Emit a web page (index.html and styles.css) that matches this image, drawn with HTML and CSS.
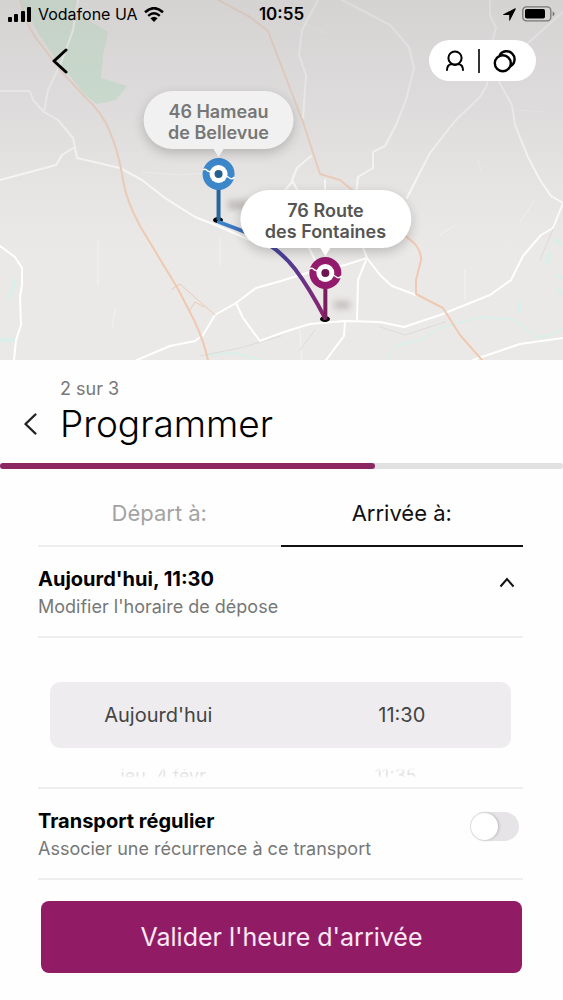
FILE: index.html
```html
<!DOCTYPE html>
<html lang="fr">
<head>
    <meta charset="UTF-8">
    <meta name="viewport" content="width=device-width, initial-scale=1.0">
    <title>Programmer</title>
    <link rel="stylesheet" href="styles.css">
</head>
<body>
    <section class="map">
        <svg class="map-canvas" viewBox="0 0 563 360" preserveAspectRatio="xMidYMid slice" fill="none" stroke-linejoin="round" stroke-linecap="round" aria-hidden="true">
            <defs>
                <linearGradient id="shade" x1="0" y1="0" x2="0" y2="1">
                    <stop offset="0" stop-color="#c6c4c4" stop-opacity=".6"/>
                    <stop offset=".3" stop-color="#cdcbcd" stop-opacity=".45"/>
                    <stop offset=".7" stop-color="#d8d6d4" stop-opacity="0"/>
                </linearGradient>
                <linearGradient id="route" gradientUnits="userSpaceOnUse" x1="218" y1="222" x2="325" y2="319">
                    <stop offset="0" stop-color="#3a86cb"/>
                    <stop offset=".5" stop-color="#4c3f97"/>
                    <stop offset="1" stop-color="#90206c"/>
                </linearGradient>
                <filter id="soft" x="-50%" y="-50%" width="200%" height="200%"><feGaussianBlur stdDeviation="3"/></filter>
            </defs>
            <rect width="563" height="360" fill="#ebe9e7"/>
            <!-- parc et eau -->
            <path fill="#c5e4cb" d="M20 0H77L79 15L108 32L103 55L101 78L127 86L116 100L97 104L85 95L70 76L55 58L40 36Z"/>
            <g stroke="#daeeea" stroke-width="2">
                <path d="M388 360L395 346L420 340L440 328L480 317L515 320L535 337L548 336L563 329"/>
                <path d="M208 355L235 353L260 360"/>
                <path d="M0 340H14M15 280L10 297M546 262L550 254M556 240L560 244M558 276L563 278M519 302V311M558 290L563 294" stroke-width="4"/>
            </g>
            <!-- routes secondaires -->
            <g stroke="#f4f3f1" stroke-width="1">
                <path d="M142 172L180 175L205 173M230 215Q240 208 252 212M380 0M220 238V265M98 240V285M115 310L112 328M465 270V300M520 222L535 200"/>
                <path d="M281 13L330 35M515 110L545 112M478 160L481 172M440 235L455 225M300 330L302 360"/>
            </g>
            <path stroke="#dddbd9" stroke-width="1" d="M200 356L240 348L281 336M380 327L405 335L445 322M540 260L555 225M315 330L300 350"/>
            <g stroke="#fff" stroke-width="2">
                <path d="M0 91H30L33 100L44 112L58 120L73 138L77 158L120 168L142 180L165 198L195 217L218 226L245 238L270 248"/>
                <path d="M0 180L30 172L56 165L62 155L75 147"/>
                <path d="M78 0L73 30L66 50L60 65L48 90L44 112"/>
                <path d="M0 246L15 257L22 268V285L20 297L21 325L16 340L14 360"/>
                <path d="M137 360L170 346L195 341L203 335L215 315L236 303L256 288L281 281L310 272L345 265L367 258L380 275L392 286L416 295"/>
                <path d="M236 303L243 318L260 341L281 333L310 324L345 321L380 322L404 327L440 315L490 295L511 280L523 256L541 235L553 228L563 203"/>
                <path d="M563 12L545 28L528 43M498 80L512 105L515 125L528 157L540 180L551 196L563 203"/>
                <path d="M490 0V15L496 28L492 42L487 85L480 97L455 121L430 153L416 180L407 198"/>
                <path d="M318 0L302 30L299 55L306 75L303 118"/>
                <path d="M342 0L390 25L409 47L414 68L406 100L396 125L385 146L373 152V168L358 177L356 195L352 225L362 245L367 258L358 280L357 320"/>
                <path d="M311 156L297 168L292 180L300 195M325 180V200M305 240L315 260M281 195L292 182"/>
                <path d="M345 321L344 336L326 360M473 360L520 344L563 338"/>
            </g>
            <!-- grands axes -->
            <g stroke="#efc9b1" stroke-width="2">
                <path d="M20 0L24 12Q28 30 43 47L62 72L85 97Q102 112 110 132Q119 153 123 180Q126 200 140 226L178 289L195 322Q204 342 208 360"/>
                <path d="M218 0L250 17L268 31L281 65L303 122L320 174L340 180L351 189L370 205L408 238Q422 248 421 260L416 280V294L443 308L460 335L482 360"/>
                <path d="M172 289L180 284L215 315M190 310L195 302L204 307" stroke-width="1"/>
            </g>
            <rect width="563" height="360" fill="url(#shade)"/>
            <!-- trajet -->
            <path fill="#a7a5a3" filter="url(#soft)" opacity=".6" d="M228 200H248V210H228ZM334 301H350V309H334Z"/>
            <ellipse cx="218" cy="220" rx="5" ry="3" fill="#000"/>
            <ellipse cx="325" cy="319" rx="5" ry="3" fill="#000"/>
            <path stroke="url(#route)" stroke-width="4" d="M219 222L240 230Q275 243 295 269Q310 289 325 318"/>
        </svg>

        <div class="pin pin-start">
            <p class="bubble">46 Hameau<br>de Bellevue</p>
            <svg class="marker" width="34" height="64" viewBox="0 0 34 64" fill="none" aria-hidden="true">
                <path stroke="#28659b" stroke-width="4" d="M17 29V62"/>
                <circle cx="17" cy="16" r="16" fill="#3c86ca"/>
                <circle cx="17" cy="16" r="9" fill="#fff"/>
                <circle cx="17" cy="16" r="4" fill="#265f8e"/>
                <path stroke="#fff" stroke-width="1.4" d="M1 12Q4 10 6 13L9 14M25 18L28 20Q31 22 33 19"/>
            </svg>
        </div>
        <div class="pin pin-end">
            <p class="bubble">76 Route<br>des Fontaines</p>
            <svg class="marker" width="34" height="64" viewBox="0 0 34 64" fill="none" aria-hidden="true">
                <path stroke="#77205d" stroke-width="4" d="M17 29V62"/>
                <circle cx="17" cy="16" r="16" fill="#921b6b"/>
                <circle cx="17" cy="16" r="9" fill="#fff"/>
                <circle cx="17" cy="16" r="4" fill="#6e1450"/>
                <path stroke="#fff" stroke-width="1.4" d="M1 12Q4 10 6 13L9 14M25 18L28 20Q31 22 33 19"/>
            </svg>
        </div>

        <div class="map-top">
            <div class="status-bar">
                <div class="status-left">
                    <svg width="24" height="15" viewBox="0 0 24 15" aria-hidden="true">
                        <rect x="0" y="10" width="4" height="5" rx="1"/>
                        <rect x="6" y="7" width="4" height="8" rx="1"/>
                        <rect x="13" y="4" width="4" height="11" rx="1"/>
                        <rect x="19" y="0" width="4" height="15" rx="1"/>
                    </svg>
                    <span>Vodafone UA</span>
                    <svg width="20" height="15" viewBox="0 0 20 15" fill="none" stroke="#000" aria-hidden="true">
                        <path stroke-width="2.6" d="M1 5.2Q10 -2.8 19 5.2"/>
                        <path stroke-width="2.4" d="M4.2 8.8Q10 3.6 15.8 8.8"/>
                        <path fill="#000" stroke="none" d="M10 15L6.4 11.3Q10 8.2 13.6 11.3Z"/>
                    </svg>
                </div>
                <span class="status-time">10:55</span>
                <div class="status-right">
                    <svg width="13" height="13" viewBox="0 0 13 13" aria-hidden="true"><path d="M0 6.5L12 .2Q13 0 12.8 1L6.8 12.7Q6.3 13 6.2 12.3V6.9H.6Q-.2 6.8 0 6.5Z"/></svg>
                    <svg width="33" height="16" viewBox="0 0 33 16" aria-hidden="true">
                        <rect x=".8" y=".8" width="28" height="14" rx="3.6" fill="none" stroke="#777" stroke-width="1.3"/>
                        <rect x="3" y="3" width="20" height="9.6" rx="1.8"/>
                        <path fill="#777" d="M30.6 5.4Q32.6 6 32.6 7.8T30.6 10.2Z"/>
                    </svg>
                </div>
            </div>
            <div class="map-actions">
                <button class="icon-button" type="button" aria-label="Retour">
                    <svg width="16" height="26" viewBox="0 0 16 26" fill="none" stroke="#000" stroke-width="3" stroke-linecap="round" stroke-linejoin="round"><path d="M14 2L2 13L14 24"/></svg>
                </button>
                <div class="pill">
                    <button class="icon-button" type="button" aria-label="Profil">
                        <svg width="18" height="22" viewBox="0 0 18 22" fill="none" stroke="#000" stroke-width="2" stroke-linecap="round"><circle cx="9" cy="8" r="6.6"/><path d="M1 20Q1 15 5.4 14Q9 16 12.6 14Q17 15 17 20"/></svg>
                    </button>
                    <span class="pill-line"></span>
                    <button class="icon-button" type="button" aria-label="Trajets">
                        <svg width="24" height="24" viewBox="0 0 24 24" fill="none" stroke="#000" stroke-width="2.4"><path d="M6.6 6.3A8 8 0 1 1 17.5 17.2"/><circle cx="9.8" cy="14.2" r="8"/></svg>
                    </button>
                </div>
            </div>
        </div>
    </section>

    <main>
        <header class="step">
            <button class="icon-button" type="button" aria-label="Étape précédente">
                <svg width="13" height="22" viewBox="0 0 13 22" fill="none" stroke="#222" stroke-width="2.4" stroke-linecap="round" stroke-linejoin="round"><path d="M11.4 1.5L1.5 11L11.4 20.5"/></svg>
            </button>
            <div>
                <p class="step-count">2 sur 3</p>
                <h1>Programmer</h1>
            </div>
        </header>
        <div class="progress"><div class="progress-bar" style="width: 66.6%"></div></div>

        <div class="content">
            <div class="tabs" role="tablist">
                <button class="tab" type="button" role="tab" aria-selected="false">Départ à:</button>
                <button class="tab active" type="button" role="tab" aria-selected="true">Arrivée à:</button>
            </div>

            <button class="row" type="button" aria-expanded="true">
                <span class="row-text">
                    <span class="row-title">Aujourd'hui, 11:30</span>
                    <span class="row-sub">Modifier l'horaire de dépose</span>
                </span>
                <svg class="chevron" width="16" height="11" viewBox="0 0 16 11" fill="none" stroke="#111" stroke-width="2"><path d="M1.5 9.5L8 2L14.5 9.5"/></svg>
            </button>

            <div class="picker">
                <div class="picker-row selected">
                    <span>Aujourd'hui</span>
                    <span class="picker-time">11:30</span>
                </div>
                <div class="picker-row next">
                    <span>jeu. 4 févr.</span>
                    <span>11:35</span>
                </div>
            </div>

            <label class="row" for="recurring">
                <span class="row-text">
                    <span class="row-title">Transport régulier</span>
                    <span class="row-sub">Associer une récurrence à ce transport</span>
                </span>
                <input class="switch" type="checkbox" id="recurring">
            </label>

            <button class="submit" type="button">Valider l'heure d'arrivée</button>
        </div>
    </main>
</body>
</html>
```

FILE: styles.css
```css
* {
    box-sizing: border-box;
}

body {
    margin: 0;
    background-color: #fefefe;
    color: #000;
    font-family: Inter, "Liberation Sans", sans-serif;
}

p, h1 {
    margin: 0;
}

button {
    padding: 0;
    border: none;
    background: transparent;
    color: inherit;
    font-family: inherit;
    cursor: pointer;
}

svg {
    display: block;
    flex: none;
}

/* carte */
.map {
    position: relative;
    height: 360px;
    overflow: hidden;
}

.map-canvas {
    position: absolute;
    inset: 0;
    width: 100%;
    height: 100%;
}

.map-top {
    position: relative;
}

.status-bar {
    display: grid;
    grid-template-columns: 1fr auto 1fr;
    align-items: center;
    height: 28px;
    padding: 0 8px;
    font-size: 16px;
}

.status-left, .status-right {
    display: flex;
    align-items: center;
    gap: 6px;
}

.status-right {
    justify-content: flex-end;
}

.status-time {
    font-size: 17px;
    font-weight: 600;
}

.map-actions {
    display: flex;
    align-items: center;
    justify-content: space-between;
    padding: 12px 27px 0 52px;
}

.icon-button {
    display: flex;
    align-items: center;
    justify-content: center;
}

.pill {
    display: flex;
    align-items: center;
    justify-content: space-between;
    width: 107px;
    height: 41px;
    padding: 0 19px 0 17px;
    background-color: #fff;
    border-radius: 21px;
}

.pill-line {
    width: 2px;
    height: 24px;
    background-color: #333;
}

.pin {
    position: absolute;
    display: flex;
    flex-direction: column;
    align-items: center;
    gap: 9px;
    transform: translateX(-50%);
}

.pin-start {
    top: 91px;
    left: calc(50% - 63px);
}

.pin-end {
    top: 190px;
    left: calc(50% + 44px);
}

.bubble {
    position: relative;
    padding: 10px 25px 6px;
    border-radius: 30px;
    background-color: #fff;
    box-shadow: 0 4px 12px rgba(0, 0, 0, 0.2);
    color: #555;
    font-size: 18px;
    font-weight: 600;
    line-height: 21px;
    text-align: center;
    white-space: nowrap;
}

.bubble::after {
    content: "";
    position: absolute;
    top: 100%;
    left: 50%;
    margin-left: -5px;
    border: 5px solid transparent;
    border-top: 8px solid #fff;
    border-bottom: none;
}

.pin-start .bubble {
    background-color: #f1f1f1;
    color: #777;
}

.pin-start .bubble::after {
    border-top-color: #f1f1f1;
}

/* étape */
.step {
    display: flex;
    align-items: flex-end;
    gap: 23px;
    padding: 17px 24px 17px;
}

.step .icon-button {
    height: 44px;
}

.step-count {
    color: #777;
    font-size: 18px;
    line-height: 24px;
}

h1 {
    font-size: 37px;
    font-weight: 300;
    line-height: 45px;
}

.progress {
    height: 6px;
    border-radius: 3px;
    background-color: #e2e1e2;
}

.progress-bar {
    height: 100%;
    border-radius: 3px;
    background-color: #8b2862;
}

.content {
    padding: 0 40px 28px 38px;
}

.tabs {
    display: grid;
    grid-template-columns: 1fr 1fr;
    padding-top: 12px;
}

.tab {
    height: 66px;
    border-bottom: 2px solid #eee;
    color: #a3a3a3;
    font-size: 22px;
}

.tab.active {
    border-bottom-color: #111;
    color: #111;
}

.row {
    display: flex;
    align-items: center;
    justify-content: space-between;
    width: 100%;
    height: 91px;
    padding-top: 2px;
    border-bottom: 2px solid #eee;
    text-align: left;
}

.row-title, .row-sub {
    display: block;
    line-height: 28px;
}

.row-title {
    font-size: 20px;
    font-weight: 700;
}

.row-sub {
    color: #777;
    font-size: 18px;
}

.chevron {
    margin: 0 8px 20px 0;
}

.picker {
    height: 151px;
    padding: 44px 12px 0;
    border-bottom: 2px solid #eee;
}

.picker-row {
    display: grid;
    grid-template-columns: 1fr 1fr;
    color: #444;
    font-size: 20px;
    text-align: center;
}

.picker-row.selected {
    grid-template-columns: 47% 1fr;
    align-items: center;
    height: 66px;
    border-radius: 10px;
    background-color: #eeecef;
}

.picker-time {
    padding-left: 26px;
}

/* ligne suivante, à peine visible en bas de la roue */
.picker-row.next {
    margin-top: 17px;
    color: #e2e2e2;
    font-size: 18px;
    line-height: 22px;
    mask-image: linear-gradient(transparent 3px, #000 7px, #000 10px, transparent 13px);
}

.switch {
    appearance: none;
    display: flex;
    align-items: center;
    width: 49px;
    height: 29px;
    margin: 0 4px 16px 0;
    padding: 1px;
    border-radius: 15px;
    background-color: #e6e4e7;
    cursor: pointer;
}

.switch::before {
    content: "";
    width: 27px;
    height: 27px;
    border-radius: 50%;
    background-color: #fff;
    box-shadow: 1px 0 3px rgba(0, 0, 0, 0.2);
}

.switch:checked {
    justify-content: flex-end;
    background-color: #921b66;
}

.submit {
    display: block;
    width: calc(100% - 4px);
    height: 72px;
    margin: 21px 1px 0 3px;
    border-radius: 8px;
    background-color: #921b66;
    color: #fbe9f6;
    font-size: 25px;
}
```
